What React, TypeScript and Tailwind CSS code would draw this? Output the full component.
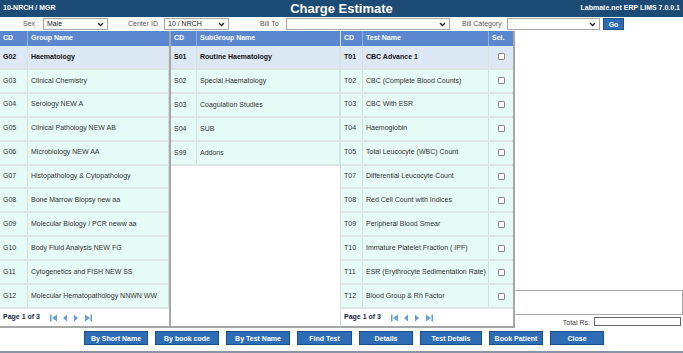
import React from 'react';

const GROUPS: [string, string][] = [
  ['G02', 'Haematology'],
  ['G03', 'Clinical Chemistry'],
  ['G04', 'Serology NEW A'],
  ['G05', 'Clinical Pathology NEW AB'],
  ['G06', 'Microbiology NEW AA'],
  ['G07', 'Histopathology & Cytopathology'],
  ['G08', 'Bone Marrow Biopsy new aa'],
  ['G09', 'Molecular Biology / PCR neww aa'],
  ['G10', 'Body Fluid Analysis NEW FG'],
  ['G11', 'Cytogenetics and FISH NEW SS'],
  ['G12', 'Molecular Hematopathology NNWN WW'],
];

const SUBGROUPS: [string, string][] = [
  ['S01', 'Routine Haematology'],
  ['S02', 'Special Haematology'],
  ['S03', 'Coagulation Studies'],
  ['S04', 'SUB'],
  ['S99', 'Addons'],
];

const TESTS: [string, string][] = [
  ['T01', 'CBC Advance 1'],
  ['T02', 'CBC (Complete Blood Counts)'],
  ['T03', 'CBC With ESR'],
  ['T04', 'Haemoglobin'],
  ['T05', 'Total Leucocyte (WBC) Count'],
  ['T07', 'Differential Leucocyte Count'],
  ['T08', 'Red Cell Count with Indices'],
  ['T09', 'Peripheral Blood Smear'],
  ['T10', 'Immature Platelet Fraction ( IPF)'],
  ['T11', 'ESR (Erythrocyte Sedimentation Rate)'],
  ['T12', 'Blood Group & Rh Factor'],
];

// label + width of each footer button
const BUTTONS: [string, string][] = [
  ['By Short Name', 'w-[64px]'],
  ['By book code', 'w-[64px]'],
  ['By Test Name', 'w-[64px]'],
  ['Find Test', 'w-[55px]'],
  ['Details', 'w-[54px]'],
  ['Test Details', 'w-[62px]'],
  ['Book Patient', 'w-[54px]'],
  ['Close', 'w-[54px]'],
];

const Chevron = () => (
  <svg width="7" height="5" viewBox="0 0 7 5" className="shrink-0">
    <path d="M1 1 L3.5 3.5 L6 1" stroke="#222" strokeWidth="1.3" fill="none" />
  </svg>
);

const Select: React.FC<{ value?: string; className: string }> = ({ value, className }) => (
  <div className={`h-[12px] border border-[#a9a9a9] bg-white flex items-center justify-between pl-[3px] pr-[3px] text-[7px] text-[#222] ${className}`}>
    <span>{value}</span>
    <Chevron />
  </div>
);

const Pager = () => (
  <div className="h-[17px] flex items-center pl-[3px] text-[7px] font-bold text-[#1a2a4a] bg-white">
    <span className="w-[47px]">Page 1 of 3</span>
    <svg width="44" height="8" viewBox="0 0 44 8">
      <rect x="0" y="0.5" width="1.5" height="7" fill="#6a9be0" />
      <path d="M7 0.5 L2 4 L7 7.5 Z" fill="#6a9be0" />
      <path d="M17 0.5 L13 4 L17 7.5 Z" fill="#6a9be0" />
      <path d="M24 0.5 L28 4 L24 7.5 Z" fill="#6a9be0" />
      <path d="M35 0.5 L40 4 L35 7.5 Z" fill="#6a9be0" />
      <rect x="40.5" y="0.5" width="1.5" height="7" fill="#6a9be0" />
    </svg>
  </div>
);

const HeadCell: React.FC<{ children: React.ReactNode; className: string }> = ({ children, className }) => (
  <div className={`h-full flex items-center pl-[3px] border-r border-[#8fb0e6] ${className}`}>{children}</div>
);

const Row: React.FC<{ cd: string; name: string; cdW: string; first: boolean; check?: boolean }> = ({ cd, name, cdW, first, check }) => (
  <div className={`h-[24px] flex border-b-2 border-[#dae7e5] ${first ? 'bg-[#dde8f5] font-bold text-[#111]' : 'bg-[#e6fbf6] text-[#333]'}`}>
    <div className={`${cdW} shrink-0 flex items-center pl-[3px] border-r border-[#d3e3e0]`}>{cd}</div>
    <div className="flex-1 flex items-center pl-[3px] border-r border-[#d3e3e0] whitespace-nowrap">{name}</div>
    {check && (
      <div className="w-[24px] shrink-0 flex items-center justify-center">
        <div className="w-[7px] h-[7px] border border-[#888] bg-white rounded-[1px]" />
      </div>
    )}
  </div>
);

export default function App() {
  return (
    <div className="w-[683px] h-[353px] bg-white flex flex-col overflow-hidden font-['Liberation_Sans',Arial,sans-serif] text-[7px]">
      {/* title bar */}
      <div className="h-[17px] bg-[#1c4c76] flex items-center px-[3px] text-white">
        <div className="flex-1 font-bold text-[7px]">10-NRCH / MGR</div>
        <div className="font-bold text-[13px] leading-none">Charge Estimate</div>
        <div className="flex-1 text-right font-bold text-[7px]">Labmate.net ERP LIMS 7.0.0.1</div>
      </div>

      {/* filter bar */}
      <div className="h-[14px] flex items-center text-[#555]">
        <span className="ml-[23px] w-[20px]">Sex</span>
        <Select value="Male" className="w-[65px]" />
        <span className="ml-[20px] w-[36px]">Center ID</span>
        <Select value="10 / NRCH" className="w-[65px]" />
        <span className="ml-[31px] w-[26px]">Bill To</span>
        <Select className="w-[164px]" />
        <span className="ml-[12px] w-[45px]">Bill Category</span>
        <Select className="w-[93px]" />
        <button className="ml-[3px] w-[21px] h-[12px] bg-[#2c6cb4] border border-[#1b4f8a] text-white font-bold text-[7px] leading-none">Go</button>
      </div>

      {/* grids */}
      <div className="h-[297px] flex">
        <div className="w-[515px] flex border-b-2 border-r-2 border-[#a7a7a7]">
          {/* groups */}
          <div className="w-[171px] flex flex-col border-r-2 border-[#a7a7a7]">
            <div className="h-[15px] bg-[#5b87d1] flex text-white font-bold">
              <HeadCell className="w-[28px]">CD</HeadCell>
              <HeadCell className="flex-1 border-r-0">Group Name</HeadCell>
            </div>
            {GROUPS.map(([cd, name], i) => (
              <Row key={cd} cd={cd} name={name} cdW="w-[28px]" first={i === 0} />
            ))}
            <Pager />
          </div>
          {/* subgroups */}
          <div className="w-[170px] flex flex-col border-r border-[#d3e3e0]">
            <div className="h-[15px] bg-[#5b87d1] flex text-white font-bold">
              <HeadCell className="w-[26px]">CD</HeadCell>
              <HeadCell className="flex-1 border-r-0">SubGroup Name</HeadCell>
            </div>
            {SUBGROUPS.map(([cd, name], i) => (
              <Row key={cd} cd={cd} name={name} cdW="w-[26px]" first={i === 0} />
            ))}
          </div>
          {/* tests */}
          <div className="flex-1 flex flex-col">
            <div className="h-[15px] bg-[#5b87d1] flex text-white font-bold">
              <HeadCell className="w-[22px]">CD</HeadCell>
              <HeadCell className="flex-1">Test Name</HeadCell>
              <div className="w-[24px] h-full flex items-center pl-[3px]">Sel.</div>
            </div>
            {TESTS.map(([cd, name], i) => (
              <Row key={cd} cd={cd} name={name} cdW="w-[22px]" first={i === 0} check />
            ))}
            <Pager />
          </div>
        </div>

        {/* right side */}
        <div className="flex-1 flex flex-col justify-end">
          <div className="h-[25px] border border-[#a7a7a7] -ml-[1px]" />
          <div className="h-[13px] flex items-center justify-end pr-[2px] text-[#444]">
            <span className="mr-[4px] mt-[3px]">Total Rs.</span>
            <div className="w-[87px] h-[9px] border border-[#666] bg-white" />
          </div>
        </div>
      </div>

      {/* buttons */}
      <div className="flex-1 flex items-start pt-[3px] pl-[84px] gap-[7px]">
        {BUTTONS.map(([b, w]) => (
          <button
            key={b}
            className={`${w} h-[14px] bg-[#2d6db5] border border-[#1c4f8a] text-white font-bold text-[7px] leading-none whitespace-nowrap`}
          >
            {b}
          </button>
        ))}
      </div>
      <div className="h-[2px] bg-[#8a93a3]" />
    </div>
  );
}
